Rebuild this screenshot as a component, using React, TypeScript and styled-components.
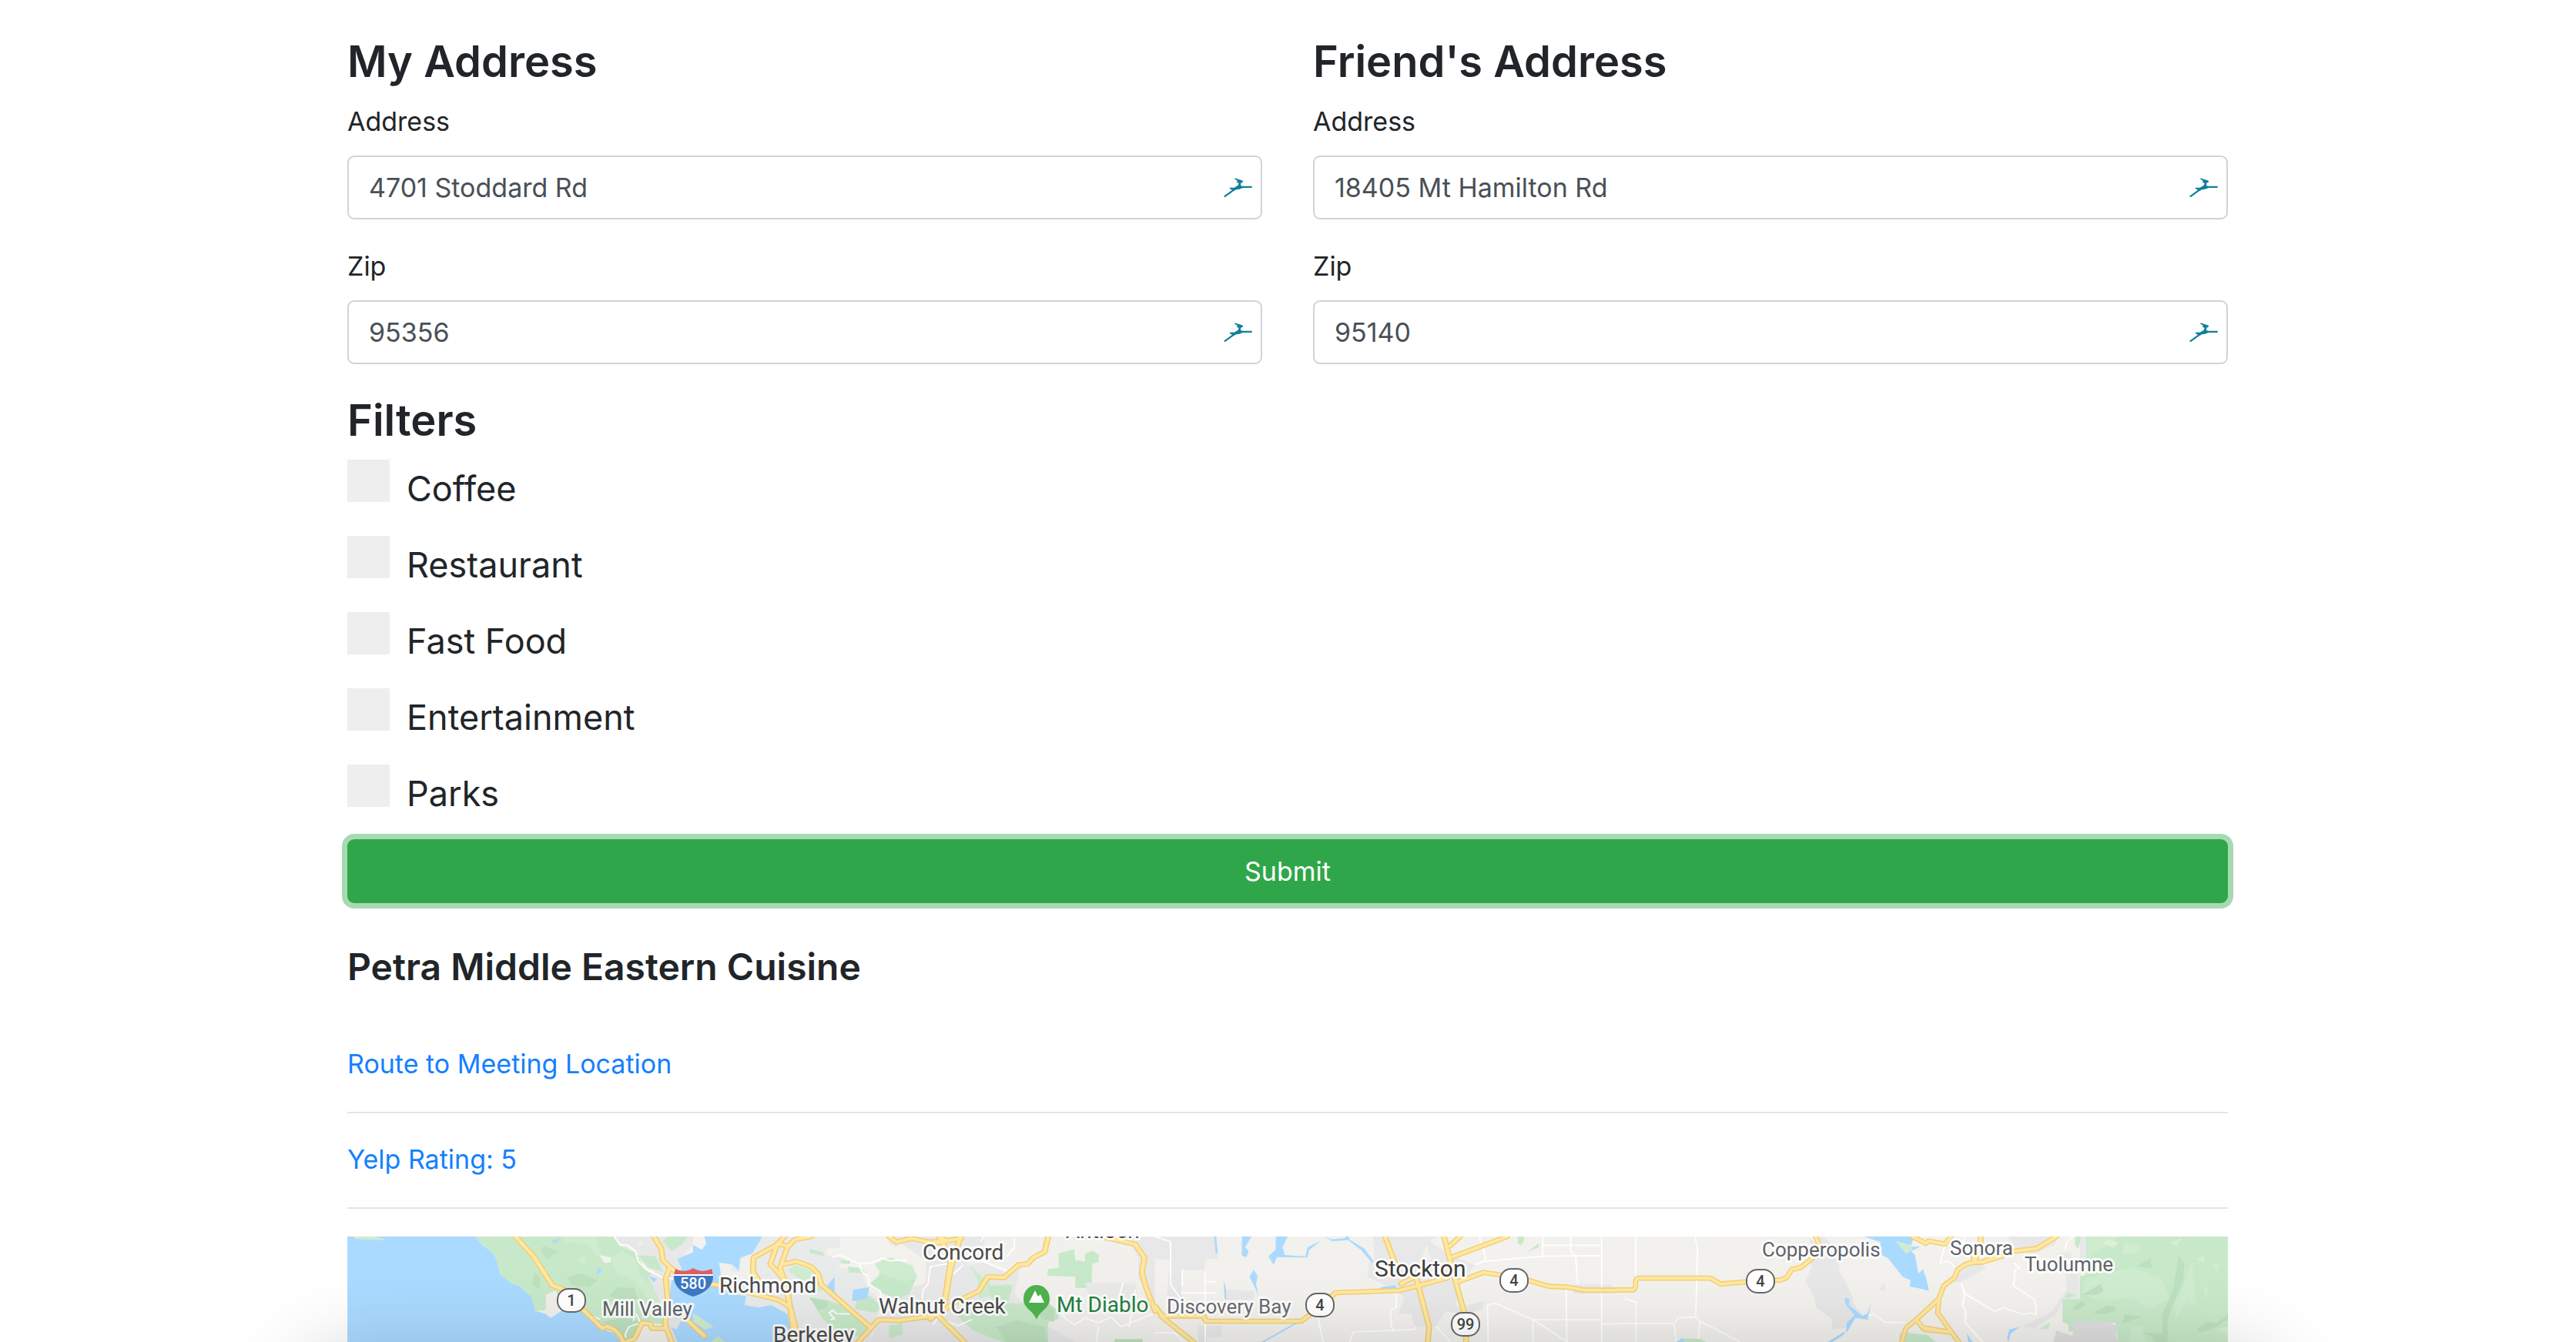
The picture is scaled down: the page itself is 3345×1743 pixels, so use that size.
import React from "react";
import styled, { createGlobalStyle } from "styled-components";

const GlobalStyle = createGlobalStyle`
  *, *::before, *::after { box-sizing: border-box; }
  body {
    margin: 0;
    background: #fff;
    color: #212529;
    font-family: Inter, "Liberation Sans", sans-serif;
    font-size: 34px;
    line-height: 53px;
  }
`;

const Page = styled.div`
  position: relative;
  display: flex;
  flex-direction: column;
  min-height: 100vh;
  padding: 43px 33px 0 32px;
  overflow: hidden;
`;

const Container = styled.main`
  display: flex;
  flex: 1;
  flex-direction: column;
  width: 100%;
  max-width: 2442px;
  margin: 0 auto;
`;

const AddressForm = styled.form`
  display: flex;
  flex-direction: column;
`;

const Columns = styled.div`
  display: grid;
  grid-template-columns: 1fr 1fr;
  gap: 66px;
  margin-bottom: 36px;
`;

const Heading = styled.h3`
  margin: 0 0 14px;
  font-size: 56px;
  font-weight: 600;
  line-height: 74px;
`;

const Group = styled.div`
  & + & {
    margin-top: 34px;
  }
`;

const Label = styled.label`
  display: block;
  margin-bottom: 18px;
`;

const InputWrap = styled.div`
  position: relative;
  display: flex;
  align-items: center;
`;

const TextInput = styled.input`
  width: 100%;
  height: 83px;
  padding: 0 60px 0 26px;
  border: 2px solid #ced4da;
  border-radius: 9px;
  background: #fff;
  color: #495057;
  font: inherit;
`;

const LeapIcon = styled.svg`
  position: absolute;
  right: 13px;
  width: 37px;
  height: 26px;
  pointer-events: none;
`;

const FilterList = styled.div`
  display: flex;
  flex-direction: column;
  gap: 24px;
  margin-bottom: 22px;
`;

const FilterRow = styled.label`
  display: flex;
  align-items: flex-start;
  gap: 22px;
  font-size: 45px;
  line-height: 75px;
`;

const Check = styled.input`
  width: 55px;
  height: 55px;
  margin: 0;
  appearance: none;
  background: #eee;
  &:checked {
    background: #2196f3;
  }
`;

const Submit = styled.button`
  height: 83px;
  padding: 0;
  border: 0;
  border-radius: 9px;
  background: #30a64a;
  box-shadow: 0 0 0 7px #a7dab3;
  color: #fff;
  font: inherit;
`;

const PlaceName = styled.h4`
  margin: 51px 0 35px;
  font-size: 48px;
  font-weight: 600;
  line-height: 63px;
`;

const LinkRow = styled.div`
  padding: 33px 0 36px;
  border-bottom: 2px solid #e5e5e5;
`;

const Link = styled.a`
  color: #1480ff;
  text-decoration: none;
`;

const MapFrame = styled.div`
  display: flex;
  flex: 1;
  min-height: 137px;
  margin-top: 36px;
  overflow: hidden;
`;

const MapDrawing = styled.svg`
  display: block;
  width: 100%;
  height: 137px;
  min-height: 100%;
  font-family: Roboto, "Liberation Sans", sans-serif;
`;

const BottomShade = styled.div`
  position: absolute;
  top: calc(100% + 26px);
  left: 12%;
  right: 12%;
  height: 200px;
  border-radius: 20px;
  box-shadow: 0 0 110px rgba(0, 0, 0, 0.25);
  pointer-events: none;
`;

function Field({ id, label, value }: { id: string; label: string; value: string }) {
  return (
    <Group>
      <Label htmlFor={id}>{label}</Label>
      <InputWrap>
        <TextInput id={id} type="text" defaultValue={value} />
        <LeapIcon viewBox="147 146 111 78" aria-hidden="true">
          <path
            fill="#127f99"
            d="M189 147L206 152L222 157L221 163L214 166L213 175L219 178H257V185H222L208 190L196 192L183 199L152 222L147 217L180 193L170 188L171 184L188 184L203 175L206 166L197 163L201 158L191 152Z"
          />
        </LeapIcon>
      </InputWrap>
    </Group>
  );
}

const WATER = "#aadaff";
const PARK = "#c8e9c9";
const PARK_LIGHT = "#d0ecd0";
const PARK_DARK = "#bde0bf";
const URBAN = "#e8e8e8";

/* Each sheet of the map has its own drawing grid. */
const sheets = [
  "translate(300 1580) scale(.38265 .33333)",
  "translate(900 1580) scale(.38265 .33333)",
  "translate(1500 1580) scale(.38265 .33333)",
  "translate(2100 1580) scale(.33333 .33333)",
  "translate(2500 1580) scale(.38265 .33333)",
];

const areas: [string, string][][] = [
  [
    [WATER, "M395 78H830L853 112L885 137L900 165L914 227L940 243L952 262L975 268L1020 312L1033 368L1066 378L1085 395L1128 362L1200 372L1255 436L1300 455L1325 489H395Z"],
    [PARK, "M830 78H1300L1320 115L1375 140L1405 205L1440 235L1450 330L1470 420L1395 412L1350 480L1325 489L1300 445L1260 430L1200 365L1128 340L1070 300L1070 365L1033 368L1020 312L975 268L952 262L914 227L900 165L885 137L853 112Z"],
    [PARK_LIGHT, "M415 78H488L533 94L420 87Z"],
    [PARK_LIGHT, "M1130 78H1235L1250 130L1262 160L1235 150L1215 110L1180 105L1130 100Z"],
    [PARK_LIGHT, "M1290 160L1330 135L1370 165L1390 230L1440 290L1460 360L1420 330L1370 250L1310 225Z"],
    [PARK_DARK, "M1060 115L1110 135L1075 165L1050 135Z"],
    [PARK_DARK, "M1140 238L1190 222L1245 250L1215 275L1160 270Z"],
    [PARK_DARK, "M1028 215L1050 240L1045 280L1022 265Z"],
    [PARK_DARK, "M1310 275L1370 280L1378 320L1330 330L1285 310Z"],
    [PARK_DARK, "M1260 410L1350 390L1385 410L1365 470L1330 489L1300 445Z"],
    [PARK_LIGHT, "M1175 175L1200 150L1205 185Z"],
    ["#f1efeb", "M1070 305L1100 288L1128 345L1110 360L1085 395L1066 378Z"],
    ["#f3f1ee", "M1250 150L1290 160L1288 178L1268 182Z"],
    [URBAN, "M1300 78H1568V489H1480L1470 410L1450 320L1415 235L1440 215L1400 180L1375 135L1320 115Z"],
    [PARK, "M1380 150L1440 155L1468 215L1415 200Z"],
    [PARK, "M1465 95L1480 78H1550L1530 110L1495 135Z"],
    ["#f3f1ee", "M1380 120L1388 92L1398 105Z"],
    [WATER, "M1515 165L1568 140V489H1515L1490 420L1485 350L1495 250L1530 205Z"],
    ["#f1f0ed", "M1535 150L1568 110V140Z"],
    [WATER, "M1088 95L1117 84L1098 109Z"],
    [WATER, "M1243 200L1262 206L1240 230Z"],
    [WATER, "M1418 232L1446 242L1435 258Z"],
    [URBAN, "M1475 350L1510 400L1540 380L1512 440L1485 425Z"],
  ],
  [
    [WATER, "M0 78H235L220 150L200 240L215 310L300 330L335 400L332 489H0Z"],
    ["#e9eaea", "M235 78H680L700 110L640 180L570 200L590 280L640 330L600 489H340L320 380L265 345L222 355L175 345L180 310L130 300L85 235L130 240L88 180L130 185L155 210L160 160L200 145Z"],
    ["#f3f2ee", "M0 78H38L45 105L30 130L0 110Z"],
    ["#f1f0ed", "M88 180L132 190L130 215L160 215L160 170L190 148L220 150L195 240L150 250L95 230Z"],
    ["#f3f2ee", "M495 80H660L665 105L715 135L730 190L650 170L580 205L490 200L520 165L450 150L455 125L500 120Z"],
    ["#e8e8e9", "M670 78H1568V489H600L650 350L730 280L790 260L790 170Z"],
    ["#f1f0ed", "M985 78H1200L1185 150L1110 190L1060 220L985 180L930 190L930 120L990 110Z"],
    ["#f1f0ed", "M1210 78H1470L1510 160L1510 240L1568 340V489H1300L1190 420L1090 300L1110 205L1200 145Z"],
    [PARK, "M1240 145L1293 127L1297 170L1330 175L1330 145L1355 133L1378 150L1375 178L1355 185L1352 270L1335 278H1297V235L1202 230L1205 205L1240 200Z"],
    [PARK, "M640 170L670 160L735 190L760 230L735 300L690 325L630 290L602 260L630 230Z"],
    [PARK_LIGHT, "M615 185L660 165L745 190L757 240L720 255L640 225Z"],
    [PARK, "M395 125L440 140L447 155L395 142Z"],
    [PARK, "M500 170L535 172L530 185L505 182Z"],
    [PARK, "M525 195L565 200L590 220L530 218Z"],
    [PARK_LIGHT, "M320 210L345 190L390 205L420 245L440 290L400 300L370 250Z"],
    [PARK, "M395 315L450 325L520 350L560 400L595 440L570 470L490 450L440 400Z"],
    [PARK_DARK, "M395 315L455 330L455 355L425 365Z"],
    [PARK, "M665 425L710 415L712 460L665 475Z"],
    [PARK, "M560 290L600 310L640 350L620 375L550 360Z"],
    [PARK_LIGHT, "M940 190L985 240L1010 250L1010 310L970 320L965 250Z"],
    [PARK, "M1000 270L1085 265L1070 330L1020 345Z"],
    [PARK, "M890 380L950 330L1100 340L1195 325L1240 370L1240 400L1205 410V489H1050L950 445Z"],
    [PARK_DARK, "M1030 430L1100 405L1190 430L1205 489H1060Z"],
    [PARK_DARK, "M1165 375L1200 340L1225 360L1225 410L1185 400Z"],
    [WATER, "M455 270L480 235L480 290L510 345L480 325Z"],
    [WATER, "M543 285L598 275L590 320L540 330Z"],
    [PARK_LIGHT, "M0 375L70 430L40 440L0 410Z"],
    [PARK, "M60 489L85 465L110 489Z"],
    ["#e9e9e8", "M1330 258L1505 260V355L1340 300Z"],
    [PARK_DARK, "M1430 478H1525V489H1430Z"],
  ],
  [
    ["#f2f1ed", "M0 78H1568V489H0Z"],
    [URBAN, "M0 78H205L215 165L172 165L165 210L92 208L60 170L0 165Z"],
    [URBAN, "M50 170L90 180V320L40 310Z"],
    [URBAN, "M240 285L340 290L330 325L240 325Z"],
    [URBAN, "M740 78H960L930 95L985 140L1085 190L1040 250L1020 340L1045 380L985 370L950 430L880 430L870 380L825 380L845 315L820 290L720 235L725 180L745 175Z"],
    [URBAN, "M145 425H225V470H175V489H145Z"],
    [URBAN, "M1045 350L1118 330L1110 360L1055 380Z"],
    [URBAN, "M1420 265H1550V300H1420Z"],
    ["#f2f1ed", "M920 110L938 170L905 165Z"],
    [WATER, "M200 78H207L213 145L205 140Z"],
    [WATER, "M295 78H327L305 120L317 135L310 158L294 153Z"],
    [WATER, "M410 78H450L432 120L440 150L510 155L517 120L565 93L523 130L517 160L413 158L402 188L384 155L408 130Z"],
    [WATER, "M575 78L600 89L645 84V78H657L660 90L710 125L742 175L735 180L700 132L655 92L600 96Z"],
    [WATER, "M334 207L348 232L342 265L352 308L332 262L320 235Z"],
    [WATER, "M232 250L240 280L242 325L236 322Z"],
    [WATER, "M765 275L815 268L818 280L770 282Z"],
    [PARK, "M1230 78H1253L1250 100L1242 112L1230 105Z"],
    [PARK, "M1262 138L1302 104V120Z"],
    [WATER, "M360 489L480 412L485 415L370 489Z"],
  ],
  [
    ["#f2f1ed", "M0 78H1500V489H0Z"],
    ["#e7e7e7", "M750 80L800 78L835 105L838 155L862 165L866 215L885 245L918 315L920 340L955 385L920 400L890 435L835 440L837 400L775 355L765 310L733 250L755 205Z"],
    [WATER, "M962 78H1157L1143 118L1182 118L1145 135L1160 150L1173 223L1192 205L1214 288L1139 272L1143 248L1112 235L1055 162L1030 150L1025 100Z"],
    [PARK_LIGHT, "M1085 95L1142 110L1150 128L1125 146Z"],
    [WATER, "M887 315L906 323L902 345L955 387L975 378L988 338L976 402L928 396L892 455L893 415L925 385L888 340Z"],
    [WATER, "M820 489L885 448L886 458L838 489Z"],
    [URBAN, "M1020 285L1042 257V292Z"],
    [PARK, "M1100 458L1130 453L1212 462L1235 489H1100Z"],
    [PARK, "M250 475L320 477L348 489H240Z"],
    [WATER, "M230 489L255 475L260 489Z"],
    [WATER, "M1362 457L1384 489H1368Z"],
    [URBAN, "M1335 195L1400 180L1440 200L1350 250L1315 260Z"],
  ],
  [
    ["#f2f1ed", "M300 78H560V489H250Z"],
    [URBAN, "M280 78H450L440 110L370 145L310 130Z"],
    [URBAN, "M445 145L490 140L520 220V320L470 320L445 380L370 435L330 430L430 370L480 285L475 220Z"],
    [PARK, "M520 78H1027V489H655L645 415L600 408H503L520 438L487 450L485 420L466 412V322H524V232L545 228Z"],
    [URBAN, "M525 78H546V160L524 235Z"],
    [PARK, "M510 78H528L520 125L507 110Z"],
    ["#dedede", "M503 408H620L648 425V470L660 489H435L445 445L500 465Z"],
    [PARK_LIGHT, "M550 78H655L590 130L550 165Z"],
    [PARK_LIGHT, "M545 240L700 200L800 240L830 320L760 360L700 320L600 330L530 300Z"],
    [PARK_LIGHT, "M675 100L735 115L725 140L670 150Z"],
    ["#dcefd0", "M625 90L655 100L640 122L600 105Z"],
    [PARK_DARK, "M860 155L880 185L875 250L845 330L822 400V489H805V380L840 290L850 220Z"],
    [PARK_LIGHT, "M905 180L880 260L845 340L850 400L890 330L920 350L910 230Z"],
    [PARK_DARK, "M595 262L605 290L585 305H535Z"],
    [PARK_DARK, "M570 375L620 345L650 355L640 370L600 382Z"],
    [PARK_DARK, "M675 382L738 390L670 418Z"],
    [PARK_DARK, "M715 195L765 162L768 200Z"],
    [PARK_DARK, "M502 355L530 328L545 345L515 365Z"],
    [PARK_DARK, "M920 440L960 410L990 415L1027 382V400L990 430L935 452Z"],
    [PARK_DARK, "M733 450L805 460L820 489H780L765 465Z"],
    [PARK_LIGHT, "M700 435L735 425L750 489H690Z"],
    ["#d7edcf", "M920 165L945 155L948 180Z"],
    ["#d7edcf", "M830 105L870 82L855 115Z"],
    ["#d7edcf", "M985 440L1027 428V455Z"],
    [PARK_LIGHT, "M945 270L960 280L952 322Z"],
    [PARK_LIGHT, "M975 190L1000 180L990 215Z"],
    [PARK, "M485 295L508 310L470 320Z"],
    [PARK_LIGHT, "M383 440L423 412L418 438Z"],
    [WATER, "M278 470L285 440L322 430L290 455L282 489Z"],
    [WATER, "M0 225L12 288H0Z"],
    [WATER, "M142 457L158 489H148Z"],
    [PARK, "M0 460L35 489H0Z"],
  ],
];

const lanes: string[] = [
  "M1300 78L1320 110L1345 112L1372 135L1382 175L1410 207L1465 238L1500 243M1200 375L1250 400M1375 380L1390 415L1350 430L1337 460L1340 470M1370 390L1365 405",
  "M475 158L498 150L565 185L610 180L640 162L665 172L725 170M565 185L570 210L595 235L597 265L635 290L640 330M530 380L485 378L475 365L462 375L480 398L468 402M985 78L978 95M1090 85V120L1065 155M985 175L1070 215M860 185L805 195L797 265L780 285L778 320M915 190L885 222M1250 370L1260 395L1295 422L1330 395L1375 415L1418 392L1453 430L1568 375M1458 260L1445 320M1500 290L1480 430M1375 430L1370 489M945 402L900 425L830 395L815 420",
  "M0 78L52 98V265L90 325M92 210V270M170 220V489M90 298H208M172 255H205M0 453H65L95 489M550 380L570 489M885 432L880 440L672 450L660 489M818 300V355L798 365L802 430L808 445M1100 78L1123 165L1115 175L1090 187M1115 175L1315 155L1515 152M1315 78V155M1315 112H1515M1410 78V135L1427 155L1434 262M1515 78V489M1395 290L1397 489M1130 489L1128 345L1155 338L1282 402V489M1282 402H1515M1282 402L1400 489M955 430L1000 485M1515 418H1568",
  "M72 78V235M33 320L74 335V489M303 78L313 125L306 390M0 417H222L237 395L305 392L323 408L480 489M222 417L230 489M323 408L315 475M980 385L1000 380L1042 412H1120M1280 100L1258 183L1290 172L1315 197M1342 262L1355 300L1345 345L1360 370L1355 412L1420 489M1355 300L1470 370L1500 358M752 78L775 100M1355 78L1345 110",
  "M300 180L320 200L305 208L300 270L373 325L377 383L355 375L333 383L267 355L235 370L133 300M500 78L480 100L475 125M122 262L133 300L128 345L137 370L135 412L195 489",
];

const roads: string[] = [
  "M965 78L1025 152L1090 268L1160 298M1190 358L1260 436L1275 428L1300 440L1318 460L1330 489M1340 489L1370 475L1395 415L1423 418L1428 436H1475M1435 78L1460 125L1465 170L1490 198L1475 240L1482 330L1473 420L1495 489M1490 198L1515 220M1535 390L1568 425",
  "M310 78L285 110L205 160L203 215L220 245M285 110L262 185L305 240L325 330L360 489M400 78L345 90L320 120L295 200L320 280L335 400L345 489M285 105L320 115M0 265H75L290 325L325 350M310 185L350 175L400 195L425 225L435 265L600 430M665 78L690 100L740 85L800 100L860 95L840 80M815 105L910 85M835 78L875 165L855 320M908 78L875 200L855 330L845 360L805 400M560 489L630 402L700 405L830 385L920 489M830 385L880 340L970 290L1000 235L1055 238L1105 188L1135 185L1155 160L1193 138L1205 78M1380 78L1440 92L1500 108L1532 160L1523 215L1535 270L1568 370M0 425L38 465",
  "M0 350L25 388H165L172 408H495L560 355L612 297L830 288L990 240M20 388L60 425L130 489M780 78L818 195M835 262L880 235M885 235L930 430L925 489M980 78L1020 255L1055 400V489M1035 78L1000 115M1195 78L1010 157M1030 253L1115 218L1215 235L1270 250L1335 272L1400 275L1455 287H1568",
  "M0 286H62Q70 283 72 270V252Q74 240 85 240H362L403 263L560 250L635 248L660 238L680 207L718 197L780 145L785 105L772 78M1150 78L1203 105L1213 95L1277 107L1300 78M1415 78V125L1390 178M1500 155L1422 178L1390 178L1355 187L1325 208L1315 237L1272 270L1253 320L1248 375L1330 489M1253 320L1165 402L1125 435L1108 489M1165 402L1190 433L1290 450",
  "M188 78V100M300 135L378 125L445 78M240 155L193 178H165V145M0 440L80 450",
];

const labels = [
  { text: "Mill Valley", x: 782, y: 1709, size: 26, fill: "#5f6368" },
  { text: "Richmond", x: 934, y: 1679, size: 28, fill: "#4a4a4a" },
  { text: "Berkeley", x: 1004, y: 1743, size: 28, fill: "#4a4a4a" },
  { text: "Concord", x: 1198, y: 1636, size: 28, fill: "#4a4a4a" },
  { text: "Walnut Creek", x: 1141, y: 1706, size: 28, fill: "#4a4a4a" },
  { text: "Antioch", x: 1384, y: 1608, size: 28, fill: "#4a4a4a" },
  { text: "Mt Diablo", x: 1372, y: 1704, size: 28, fill: "#21803f" },
  { text: "Discovery Bay", x: 1515, y: 1706, size: 26, fill: "#6a6c70" },
  { text: "Stockton", x: 1785, y: 1658, size: 30, fill: "#3c3c3c" },
  { text: "Copperopolis", x: 2288, y: 1632, size: 26, fill: "#5f6368" },
  { text: "Sonora", x: 2532, y: 1630, size: 26, fill: "#5f6368" },
  { text: "Tuolumne", x: 2629, y: 1651, size: 26, fill: "#5f6368" },
];

const shields = [
  { text: "1", x: 742, y: 1689 },
  { text: "4", x: 1714, y: 1695 },
  { text: "4", x: 1966, y: 1663 },
  { text: "4", x: 2286, y: 1664 },
  { text: "99", x: 1903, y: 1720 },
];

function RegionMap() {
  return (
    <MapDrawing viewBox="451 1606 2442 137" preserveAspectRatio="xMidYMin slice" role="img" aria-label="Map">
      <rect x="451" y="1606" width="2442" height="137" fill="#f2f1ed" />
      {areas.map((list, i) => (
        <g key={i} transform={sheets[i]}>
          {list.map(([fill, d], j) => (
            <path key={j} d={d} fill={fill} />
          ))}
        </g>
      ))}
      <g fill="none" strokeLinejoin="round" strokeLinecap="round">
        {lanes.map((d, i) => (
          <path key={i} transform={sheets[i]} d={d} stroke="#fff" strokeWidth="5" />
        ))}
        {roads.map((d, i) => (
          <path key={i} transform={sheets[i]} d={d} stroke="#f3cc72" strokeWidth="20" />
        ))}
        {roads.map((d, i) => (
          <path key={i} transform={sheets[i]} d={d} stroke="#ffe8a0" strokeWidth="12" />
        ))}
      </g>
      {shields.map((s, i) => (
        <g key={i}>
          <rect x={s.x - 18} y={s.y - 15} width="36" height="30" rx="14" fill="#fff" stroke="#66676a" strokeWidth="2" />
          <text x={s.x} y={s.y + 7} fontSize="20" fontWeight="500" fill="#444" textAnchor="middle">
            {s.text}
          </text>
        </g>
      ))}
      <path d="M877 1648Q889 1654 900 1647Q912 1654 924 1648L926 1656H875Z" fill="#dc5f62" />
      <path d="M875 1656H926Q927 1676 900 1684Q874 1676 875 1656Z" fill="#3d78c5" />
      <path d="M875 1656H926" stroke="#fff" strokeWidth="2" />
      <text x="900" y="1674" fontSize="20" fontWeight="500" fill="#fff" textAnchor="middle">
        580
      </text>
      <path
        d="M1346 1669C1355 1669 1363 1676 1363 1687C1363 1700 1350 1702 1346 1714C1342 1702 1329 1700 1329 1687C1329 1676 1337 1669 1346 1669Z"
        fill="#4fb34e"
      />
      <path d="M1336 1692L1344 1676L1348 1684L1351 1681L1356 1692Z" fill="#fff" />
      {labels.map((l) => (
        <text
          key={l.text}
          x={l.x}
          y={l.y}
          fontSize={l.size}
          fill={l.fill}
          stroke="#fff"
          strokeOpacity="0.85"
          strokeWidth="6"
          strokeLinejoin="round"
          paintOrder="stroke"
        >
          {l.text}
        </text>
      ))}
    </MapDrawing>
  );
}

const filters = ["Coffee", "Restaurant", "Fast Food", "Entertainment", "Parks"];

export default function App() {
  return (
    <Page>
      <GlobalStyle />
      <Container>
        <AddressForm onSubmit={(e) => e.preventDefault()}>
          <Columns>
            <section>
              <Heading>My Address</Heading>
              <Field id="my-address" label="Address" value="4701 Stoddard Rd" />
              <Field id="my-zip" label="Zip" value="95356" />
            </section>
            <section>
              <Heading>Friend's Address</Heading>
              <Field id="friend-address" label="Address" value="18405 Mt Hamilton Rd" />
              <Field id="friend-zip" label="Zip" value="95140" />
            </section>
          </Columns>
          <Heading>Filters</Heading>
          <FilterList>
            {filters.map((name) => (
              <FilterRow key={name}>
                <Check type="checkbox" />
                {name}
              </FilterRow>
            ))}
          </FilterList>
          <Submit type="submit">Submit</Submit>
        </AddressForm>
        <PlaceName>Petra Middle Eastern Cuisine</PlaceName>
        <LinkRow>
          <Link href="#route">Route to Meeting Location</Link>
        </LinkRow>
        <LinkRow>
          <Link href="#yelp">Yelp Rating: 5</Link>
        </LinkRow>
        <MapFrame>
          <RegionMap />
        </MapFrame>
      </Container>
      <BottomShade />
    </Page>
  );
}
